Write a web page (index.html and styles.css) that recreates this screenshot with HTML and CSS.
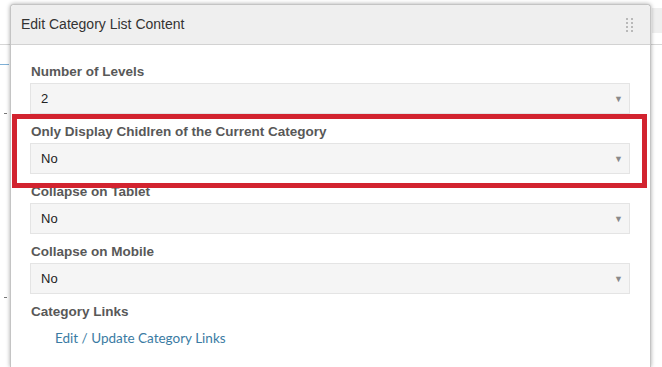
FILE: index.html
```html
<!DOCTYPE html>
<html lang="en">
<head>
<meta charset="UTF-8">
<meta name="viewport" content="width=device-width, initial-scale=1.0">
<title>Edit Category List Content</title>
<link rel="stylesheet" href="styles.css">
</head>
<body>

<!-- page behind the dialog -->
<div class="page">
    <div class="page-header">
        <div class="page-toolbar"></div>
    </div>
    <div class="page-tab"></div>
    <div class="page-mark first"></div>
    <div class="page-mark second"></div>
</div>

<div class="modal">
    <div class="modal-header">
        <div class="modal-title">Edit Category List Content</div>
        <svg class="grip" width="8" height="14" viewBox="0 0 8 14">
            <g fill="#b9b9b9">
                <rect x="0" y="0" width="2" height="2"/><rect x="5" y="0" width="2" height="2"/>
                <rect x="0" y="4" width="2" height="2"/><rect x="5" y="4" width="2" height="2"/>
                <rect x="0" y="8" width="2" height="2"/><rect x="5" y="8" width="2" height="2"/>
                <rect x="0" y="12" width="2" height="2"/><rect x="5" y="12" width="2" height="2"/>
            </g>
        </svg>
    </div>
    <div class="modal-body">
        <div class="field">
            <div class="label">Number of Levels</div>
            <div class="select"><span>2</span><span class="arrow">&#9660;</span></div>
        </div>
        <div class="field">
            <div class="label">Only Display Chidlren of the Current Category</div>
            <div class="select"><span>No</span><span class="arrow">&#9660;</span></div>
        </div>
        <div class="field">
            <div class="label">Collapse on Tablet</div>
            <div class="select"><span>No</span><span class="arrow">&#9660;</span></div>
        </div>
        <div class="field">
            <div class="label">Collapse on Mobile</div>
            <div class="select"><span>No</span><span class="arrow">&#9660;</span></div>
        </div>
        <div class="field">
            <div class="label">Category Links</div>
            <a class="link" href="#">Edit / Update Category Links</a>
        </div>
    </div>
</div>

<!-- highlight annotation -->
<div class="highlight"></div>

</body>
</html>
```

FILE: styles.css
```css
html, body {
    margin: 0;
    padding: 0;
}

body {
    width: 662px;
    height: 367px;
    overflow: hidden;
    position: relative;
    background: #fff;
    font-family: "Liberation Sans", Arial, sans-serif;
}

/* Page behind the dialog */
.page-header {
    height: 44px;
    border-bottom: 1px solid #d6d6d6;
    display: flex;
    justify-content: flex-end;
}

.page-toolbar {
    width: 10px;
    height: 25px;
    margin-top: 8px;
    background: #efefef;
}

.page-tab {
    width: 9px;
    height: 1px;
    margin-top: 19px;
    background: #7fb0d6;
}

.page-mark {
    width: 3px;
    height: 1px;
    margin-left: 4px;
    background: #777;
}

.page-mark.first {
    margin-top: 48px;
}

.page-mark.second {
    margin-top: 183px;
}

/* Dialog */
.modal {
    position: absolute;
    left: 10px;
    top: 4px;
    width: 641px;
    height: 363px;
    box-sizing: border-box;
    overflow: hidden;
    background: #fff;
    border: 1px solid #c4c4c4;
    border-bottom: none;
    border-radius: 4px 4px 0 0;
    box-shadow: 0 0 4px rgba(0, 0, 0, 0.35);
}

.modal-header {
    height: 39px;
    border-bottom: 1px solid #d2d2d2;
    border-radius: 4px 4px 0 0;
    background: #efefef;
    display: flex;
    align-items: center;
    justify-content: space-between;
    padding: 0 16px 0 10px;
}

.modal-title {
    font-size: 14px;
    line-height: 39px;
    color: #333;
}

.grip {
    display: block;
}

.modal-body {
    padding: 19px 20px 0 19px;
}

.field {
    margin-bottom: 10px;
}

.label {
    font-size: 13.5px;
    font-weight: bold;
    line-height: 16px;
    color: #585858;
    margin-bottom: 3px;
    padding-left: 1px;
}

.select {
    height: 31px;
    box-sizing: border-box;
    border: 1px solid #e4e4e4;
    background: #f5f5f5;
    display: flex;
    align-items: center;
    justify-content: space-between;
    padding: 0 6px 0 10px;
    font-size: 13px;
    color: #222;
}

.arrow {
    font-size: 9px;
    color: #8a8a8a;
}

.link {
    display: block;
    margin-top: 10px;
    padding-left: 25px;
    font-family: Lato, "Liberation Sans", sans-serif;
    font-size: 13.5px;
    line-height: 16px;
    color: #3a7ba3;
    text-decoration: none;
}

/* Red annotation box over the dialog */
.highlight {
    position: absolute;
    left: 12px;
    top: 114px;
    width: 635px;
    height: 74px;
    box-sizing: border-box;
    border: 5px solid #d2232f;
}
```
